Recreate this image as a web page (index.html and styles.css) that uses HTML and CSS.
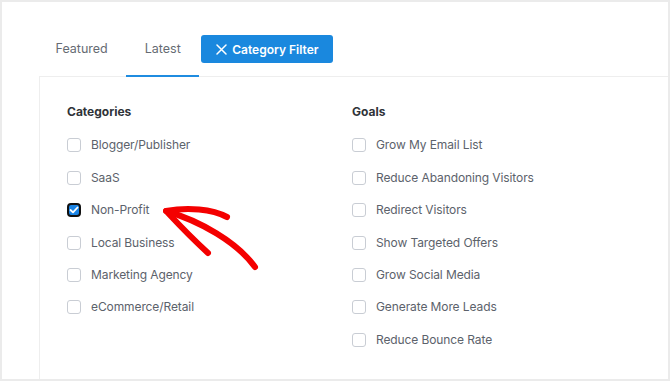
FILE: index.html
```html
<!DOCTYPE html>
<html lang="en">
  <head>
    <meta charset="UTF-8" />
    <meta name="viewport" content="width=device-width, initial-scale=1.0" />
    <title>Templates</title>
    <link rel="stylesheet" href="styles.css">
  </head>
  <body>
    <div class="frame">
      <div class="tabs">
        <div class="tab">Featured</div>
        <div class="tab active">Latest</div>
        <button class="filter-button">
          <svg width="11" height="11" viewBox="0 0 11 11"><path d="M1 1 L10 10 M10 1 L1 10" stroke="#fff" stroke-width="1.5" stroke-linecap="round"/></svg>
          Category Filter
        </button>
      </div>
      <div class="panel">
        <div class="column">
          <div class="column-title">Categories</div>
          <label class="option"><span class="box"></span>Blogger/Publisher</label>
          <label class="option"><span class="box"></span>SaaS</label>
          <label class="option"><span class="box checked"><svg width="10" height="8" viewBox="0 0 10 8"><path d="M1.5 4 L4 6.3 L8.5 1.5" fill="none" stroke="#fff" stroke-width="1.8" stroke-linecap="round" stroke-linejoin="round"/></svg></span>Non-Profit</label>
          <label class="option"><span class="box"></span>Local Business</label>
          <label class="option"><span class="box"></span>Marketing Agency</label>
          <label class="option"><span class="box"></span>eCommerce/Retail</label>
        </div>
        <div class="column">
          <div class="column-title">Goals</div>
          <label class="option"><span class="box"></span>Grow My Email List</label>
          <label class="option"><span class="box"></span>Reduce Abandoning Visitors</label>
          <label class="option"><span class="box"></span>Redirect Visitors</label>
          <label class="option"><span class="box"></span>Show Targeted Offers</label>
          <label class="option"><span class="box"></span>Grow Social Media</label>
          <label class="option"><span class="box"></span>Generate More Leads</label>
          <label class="option"><span class="box"></span>Reduce Bounce Rate</label>
        </div>
      </div>
      <!-- hand drawn arrow pointing at Non-Profit -->
      <svg class="arrow" width="670" height="381" viewBox="0 0 670 381">
        <g fill="none" stroke="#f40000" stroke-width="6" stroke-linecap="round" stroke-linejoin="round">
          <path d="M166 211 C200 221 237 242 255 267"/>
          <path d="M166 211 C188 207 212 209 227 217"/>
          <path d="M168 213 C182 228 196 242 208 253"/>
        </g>
      </svg>
    </div>
  </body>
</html>
```

FILE: styles.css
```css
body {
  margin: 0;
  font-family: Inter, "Liberation Sans", sans-serif;
  font-size: 12px;
  color: #5c626b;
}
.frame {
  position: relative;
  width: 670px;
  height: 381px;
  box-sizing: border-box;
  border: 2px solid #ebebeb;
  background: #fff;
  display: flex;
  flex-direction: column;
}
.tabs {
  display: flex;
  align-items: center;
  margin: 21px 0 -1px 35px;
  position: relative;
  z-index: 1;
}
.tab {
  height: 54px;
  line-height: 52px;
  padding: 0 18.5px;
  box-sizing: border-box;
  border-bottom: 2px solid transparent;
  font-size: 12.5px;
  color: #666b73;
}
.tab.active {border-bottom-color: #1f8ce0;}
.filter-button {
  margin-left: 2px;
  margin-top: -2px;
  height: 28px;
  width: 132px;
  padding: 0 0 0 15px;
  display: flex;
  align-items: center;
  gap: 5px;
  background-color: #1a88de;
  color: #fff;
  border: none;
  border-radius: 3px;
  font-family: inherit;
  font-size: 12px;
  font-weight: 600;
  cursor: pointer;
}
.panel {
  flex-grow: 1;
  margin-left: 37px;
  border-left: 1px solid #eeeeee;
  border-top: 1px solid #eeeeee;
  padding: 27px 0 0 27px;
  display: grid;
  grid-template-columns: 285px auto;
  align-items: start;
}
.column {display: flex;flex-direction: column;gap: 12.4px;}
.column-title {
  font-weight: 700;
  color: #2f3338;
  line-height: 16px;
  margin-bottom: 3px;
}
.option {
  display: flex;
  align-items: center;
  gap: 10px;
  line-height: 20px;
  letter-spacing: -0.1px;
}
.box {
  width: 14px;
  height: 14px;
  box-sizing: border-box;
  border: 1px solid #c9cdd4;
  border-radius: 3px;
  display: flex;
  align-items: center;
  justify-content: center;
}
.box.checked {
  background: #1a84e6;
  border: 2px solid #111;
  border-radius: 4px;
}
.arrow {
  position: absolute;
  left: -2px;
  top: -2px;
  pointer-events: none;
}
```
